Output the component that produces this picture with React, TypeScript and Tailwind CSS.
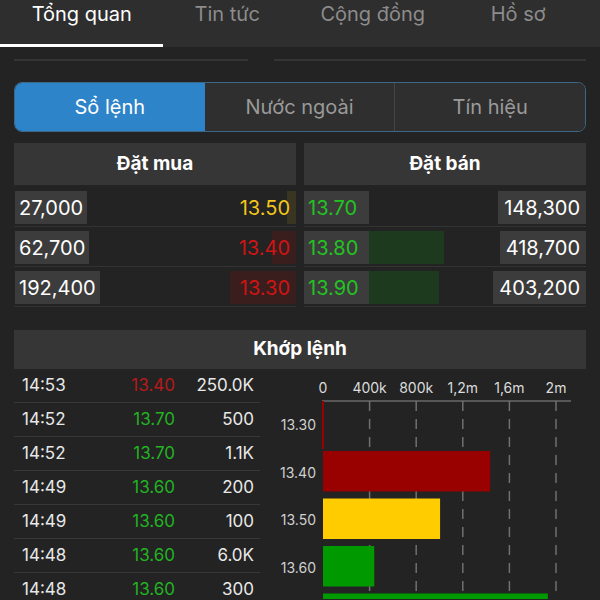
import React from 'react';

const tabs = ['Tổng quan', 'Tin tức', 'Cộng đồng', 'Hồ sơ'];

const bids = [
  { qty: '27,000', price: '13.50', color: 'text-[#f2c51c]', bar: 'bg-[#3a3520]', w: 9 },
  { qty: '62,700', price: '13.40', color: 'text-[#d01414]', bar: 'bg-[#3a1e1e]', w: 24 },
  { qty: '192,400', price: '13.30', color: 'text-[#d01414]', bar: 'bg-[#3a1e1e]', w: 66 },
];

const asks = [
  { price: '13.70', qty: '148,300', w: 0 },
  { price: '13.80', qty: '418,700', w: 75 },
  { price: '13.90', qty: '403,200', w: 70 },
];

const trades = [
  { t: '14:53', p: '13.40', v: '250.0K', up: false },
  { t: '14:52', p: '13.70', v: '500', up: true },
  { t: '14:52', p: '13.70', v: '1.1K', up: true },
  { t: '14:49', p: '13.60', v: '200', up: true },
  { t: '14:49', p: '13.60', v: '100', up: true },
  { t: '14:48', p: '13.60', v: '6.0K', up: true },
  { t: '14:48', p: '13.60', v: '300', up: true },
];

// volume by price, in thousands
const volumes = [
  { price: '13.30', vol: 20, color: '#990000' },
  { price: '13.40', vol: 1435, color: '#990000' },
  { price: '13.50', vol: 1005, color: '#ffcc00' },
  { price: '13.60', vol: 440, color: '#009900' },
  { price: '13.70', vol: 1930, color: '#009900' },
];

const VolumeChart: React.FC = () => {
  const x0 = 63;
  const pxPerK = 46.6 / 400;
  const ticks = ['0', '400k', '800k', '1,2m', '1,6m', '2m'];
  return (
    <svg width="325" height="230" className="block">
      {ticks.map((label, i) => (
        <text
          key={label}
          x={x0 + i * 46.6}
          y={24}
          textAnchor="middle"
          fontSize="14"
          fill="#dcdcdc"
          fontFamily="Inter, sans-serif"
        >
          {label}
        </text>
      ))}
      <line x1={x0 - 1} y1={32} x2={311} y2={32} stroke="#6a6a6a" strokeWidth="1.5" />
      {ticks.map((_, i) =>
        i === 0 ? null : (
          <line
            key={i}
            x1={x0 + i * 46.6}
            y1={32}
            x2={x0 + i * 46.6}
            y2={240}
            stroke="#707070"
            strokeWidth="1.5"
            strokeDasharray="10 8"
          />
        )
      )}
      {volumes.map((v, i) => {
        const top = 32 + i * 47.5;
        const w = Math.max(2, v.vol * pxPerK);
        return (
          <g key={v.price}>
            <text
              x={56}
              y={top + 29}
              textAnchor="end"
              fontSize="14"
              fill="#d0d0d0"
              fontFamily="Inter, sans-serif"
            >
              {v.price}
            </text>
            {i === 0 ? (
              <rect x={x0 - 1} y={top} width={2} height={48} fill={v.color} />
            ) : (
              <rect x={x0} y={top + 2.5} width={w} height={40.5} fill={v.color} />
            )}
          </g>
        );
      })}
    </svg>
  );
};

export default function App() {
  return (
    <div className="w-[600px] h-[600px] overflow-hidden bg-[#232323] text-white font-['Inter',sans-serif]">
      {/* top tabs */}
      <div className="relative h-[47px] bg-[#2e2e2e] flex px-[9px]">
        {tabs.map((t, i) => (
          <div
            key={t}
            className={`flex-1 text-center text-[20px] leading-[28px] ${i === 0 ? 'text-white' : 'text-[#8c8c8c]'}`}
          >
            {t}
          </div>
        ))}
        <div className="absolute left-0 bottom-0 w-[163px] h-[3px] bg-white" />
      </div>

      {/* scrolled-off content edges */}
      <div className="flex px-[14px] gap-[26px] mt-[12px]">
        <div className="w-[234px] h-[2px] bg-[#343434]" />
        <div className="flex-1 h-[2px] bg-[#343434]" />
      </div>

      {/* segment */}
      <div className="mx-[14px] mt-[21px] h-[50px] flex rounded-[8px] border border-[#3e6786] overflow-hidden text-[20px]">
        <div className="flex-1 flex items-center justify-center bg-[#2d84c8] text-white">Sổ lệnh</div>
        <div className="flex-1 flex items-center justify-center bg-[#2f2f2f] text-[#9a9a9a] border-r border-[#444]">Nước ngoài</div>
        <div className="flex-1 flex items-center justify-center bg-[#2f2f2f] text-[#9a9a9a]">Tín hiệu</div>
      </div>

      {/* order book */}
      <div className="mx-[14px] mt-[11px] flex gap-[8px] text-[20px]">
        <div className="w-[282px]">
          <div className="h-[42px] bg-[#363636] flex items-center justify-center font-bold text-[19px]">Đặt mua</div>
          {bids.map((b, i) => (
            <div
              key={b.qty}
              className={`h-[40px] pt-[4px] border-b border-[#333] flex ${i === 0 ? 'mt-[2px]' : ''}`}
            >
              <div className="h-[33px] bg-[#3c3c3c] px-[4px] ml-[1px] flex items-center">{b.qty}</div>
              <div className="flex-1 relative h-[33px] flex items-center justify-end pr-[6px]">
                <div className={`absolute right-0 top-0 h-[33px] ${b.bar}`} style={{ width: b.w }} />
                <span className={`relative ${b.color}`}>{b.price}</span>
              </div>
            </div>
          ))}
        </div>
        <div className="flex-1">
          <div className="h-[42px] bg-[#363636] flex items-center justify-center font-bold text-[19px]">Đặt bán</div>
          {asks.map((a, i) => (
            <div
              key={a.qty}
              className={`h-[40px] pt-[4px] border-b border-[#333] flex ${i === 0 ? 'mt-[2px]' : ''}`}
            >
              <div className="h-[33px] w-[65px] bg-[#3c3c3c] px-[4px] flex items-center text-[#22c322]">{a.price}</div>
              <div className="flex-1 h-[33px] flex">
                <div className="h-[33px] bg-[#1e3a1e]" style={{ width: a.w }} />
              </div>
              <div className="h-[33px] bg-[#3c3c3c] px-[6px] flex items-center">{a.qty}</div>
            </div>
          ))}
        </div>
      </div>

      {/* matched orders */}
      <div className="mx-[14px] mt-[23px] h-[39px] bg-[#363636] flex items-center justify-center font-bold text-[19px]">
        Khớp lệnh
      </div>
      <div className="flex pl-[14px]">
        <div className="w-[246px] text-[17px]">
          {trades.map((r, i) => (
            <div key={i} className="h-[34px] flex items-center border-b border-[#383838]">
              <div className="w-[100px] pl-[8px] text-[#e8e8e8]">{r.t}</div>
              <div className={`w-[61px] text-right ${r.up ? 'text-[#22b322]' : 'text-[#b51a1a]'}`}>{r.p}</div>
              <div className="flex-1 text-right pr-[6px] text-[#e8e8e8]">{r.v}</div>
            </div>
          ))}
        </div>
        <VolumeChart />
      </div>
    </div>
  );
}
